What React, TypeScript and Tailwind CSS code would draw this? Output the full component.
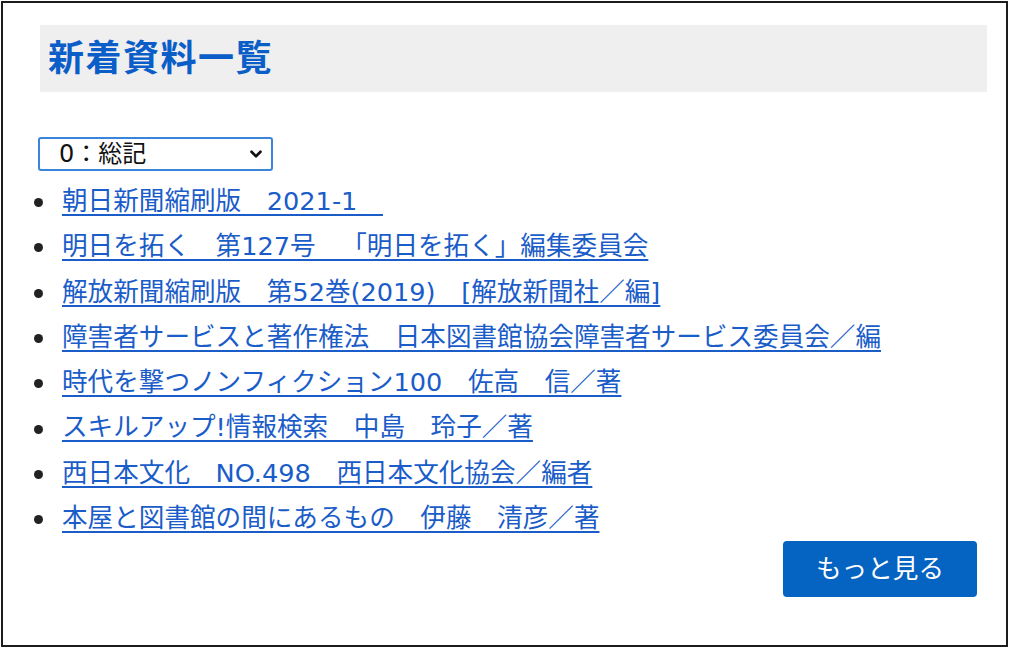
import { ChevronDown } from "lucide-react";

const items = [
  "朝日新聞縮刷版　2021-1　",
  "明日を拓く　第127号　「明日を拓く」編集委員会",
  "解放新聞縮刷版　第52巻(2019)　[解放新聞社／編]",
  "障害者サービスと著作権法　日本図書館協会障害者サービス委員会／編",
  "時代を撃つノンフィクション100　佐高　信／著",
  "スキルアップ!情報検索　中島　玲子／著",
  "西日本文化　NO.498　西日本文化協会／編者",
  "本屋と図書館の間にあるもの　伊藤　清彦／著",
];

export default function App() {
  return (
    <div
      className="w-[1010px] h-[648px] bg-white pl-[1px] pt-[1px] [text-spacing-trim:space-all]"
      style={{ fontFamily: '"DejaVu Sans", "Noto Sans CJK JP", sans-serif' }}
    >
      <div className="w-[1007px] h-[646px] border-2 border-[#1c1c1c] pl-[35px] pr-[19px] pt-[22px] flex flex-col">
        <div className="ml-[2px] h-[67px] bg-[#efefef] flex items-center pl-[8px]">
          <h2 className="text-[36px] font-bold text-[#0b5ec8] tracking-[1.5px] leading-none">
            新着資料一覧
          </h2>
        </div>

        <div className="relative mt-[45px] w-[235px]">
          <select className="appearance-none w-full h-[34px] border-2 border-[#3a85d9] rounded-[3px] bg-white pl-[19px] text-[24px] leading-none text-[#111] outline-none">
            <option>0：総記</option>
          </select>
          <ChevronDown
            size={18}
            strokeWidth={3.5}
            className="absolute right-[8px] top-[8px] text-[#111] pointer-events-none"
          />
        </div>

        <ul className="mt-[8px] text-[25.6px] leading-[45.3px]">
          {items.map((t) => (
            <li key={t} className="flex items-center whitespace-nowrap">
              <span className="w-[9px] h-[9px] ml-[-4px] mr-[19px] mt-[2px] rounded-full bg-[#222] shrink-0" />
              <a
                href="#"
                className="text-[#1a5cc8] underline underline-offset-[4px] decoration-[1.5px]"
              >
                {t}
              </a>
            </li>
          ))}
        </ul>

        <div className="flex justify-end mr-[10px]">
          <button className="w-[194px] h-[56px] rounded-[4px] bg-[#0563c1] text-white text-[25.6px] leading-none">
            もっと見る
          </button>
        </div>
      </div>
    </div>
  );
}
